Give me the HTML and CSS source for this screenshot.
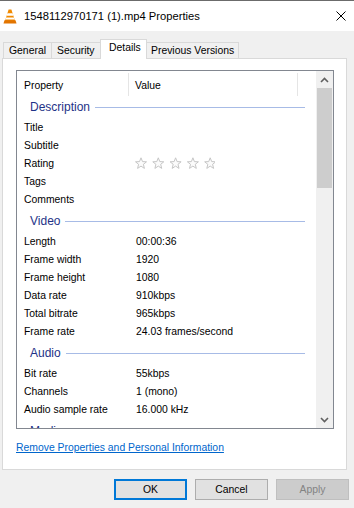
FILE: index.html
```html
<!DOCTYPE html>
<html lang="en">
  <head>
    <meta charset="UTF-8" />
    <meta name="viewport" content="width=device-width, initial-scale=1.0" />
    <title>1548112970171 (1).mp4 Properties</title>
    <link rel="stylesheet" href="styles.css">
  </head>
  <body>
    <div class="window">
      <!-- Title bar -->
      <div class="titlebar">
        <svg class="app-icon" width="14" height="15" viewBox="0 0 14 15">
          <polygon points="5.6,0.5 8.4,0.5 12,12 2,12" fill="#f18a00" />
          <polygon points="4.4,4.3 9.6,4.3 10.4,6.8 3.6,6.8" fill="#ffffff" />
          <polygon points="3.2,8.4 10.8,8.4 11.5,10.6 2.5,10.6" fill="#ffffff" />
          <polygon points="1.5,11.2 12.5,11.2 13.5,14.5 0.5,14.5" fill="#e27400" />
        </svg>
        <span class="title">1548112970171 (1).mp4 Properties</span>
        <svg class="close-icon" width="10" height="10" viewBox="0 0 10 10">
          <path d="M0.5 0.5 L9.5 9.5 M9.5 0.5 L0.5 9.5" stroke="#000" stroke-width="1" />
        </svg>
      </div>

      <!-- Tabs -->
      <div class="tabs">
        <div class="tab tab-general">General</div>
        <div class="tab tab-security">Security</div>
        <div class="tab tab-details active">Details</div>
        <div class="tab tab-versions">Previous Versions</div>
      </div>

      <!-- Tab panel -->
      <div class="panel">
        <div class="listbox">
          <div class="list-body">
            <div class="list-head">
              <div class="col-prop">Property</div>
              <div class="col-val">Value</div>
            </div>

            <div class="group first">Description</div>
            <div class="row"><span class="prop">Title</span></div>
            <div class="row"><span class="prop">Subtitle</span></div>
            <div class="row">
              <span class="prop">Rating</span>
              <span class="val">
                <svg class="stars" width="80" height="13" viewBox="0 0 80 13">
                  <g fill="#fbfbfb" stroke="#c6c6c6" stroke-width="1" stroke-linejoin="round">
                    <polygon points="6,0.8 7.5,4.6 11.5,4.8 8.4,7.3 9.4,11.4 6,9.1 2.6,11.4 3.6,7.3 0.5,4.8 4.5,4.6" />
                    <polygon transform="translate(17.3 0)" points="6,0.8 7.5,4.6 11.5,4.8 8.4,7.3 9.4,11.4 6,9.1 2.6,11.4 3.6,7.3 0.5,4.8 4.5,4.6" />
                    <polygon transform="translate(34.6 0)" points="6,0.8 7.5,4.6 11.5,4.8 8.4,7.3 9.4,11.4 6,9.1 2.6,11.4 3.6,7.3 0.5,4.8 4.5,4.6" />
                    <polygon transform="translate(51.9 0)" points="6,0.8 7.5,4.6 11.5,4.8 8.4,7.3 9.4,11.4 6,9.1 2.6,11.4 3.6,7.3 0.5,4.8 4.5,4.6" />
                    <polygon transform="translate(69.2 0)" points="6,0.8 7.5,4.6 11.5,4.8 8.4,7.3 9.4,11.4 6,9.1 2.6,11.4 3.6,7.3 0.5,4.8 4.5,4.6" />
                  </g>
                </svg>
              </span>
            </div>
            <div class="row"><span class="prop">Tags</span></div>
            <div class="row"><span class="prop">Comments</span></div>

            <div class="group">Video</div>
            <div class="row"><span class="prop">Length</span><span class="val">00:00:36</span></div>
            <div class="row"><span class="prop">Frame width</span><span class="val">1920</span></div>
            <div class="row"><span class="prop">Frame height</span><span class="val">1080</span></div>
            <div class="row"><span class="prop">Data rate</span><span class="val">910kbps</span></div>
            <div class="row"><span class="prop">Total bitrate</span><span class="val">965kbps</span></div>
            <div class="row"><span class="prop">Frame rate</span><span class="val">24.03 frames/second</span></div>

            <div class="group">Audio</div>
            <div class="row"><span class="prop">Bit rate</span><span class="val">55kbps</span></div>
            <div class="row"><span class="prop">Channels</span><span class="val">1 (mono)</span></div>
            <div class="row"><span class="prop">Audio sample rate</span><span class="val">16.000 kHz</span></div>

            <div class="group">Media</div>
          </div>

          <!-- Scrollbar -->
          <div class="scrollbar">
            <div class="sb-btn">
              <svg width="9" height="6" viewBox="0 0 9 6">
                <path d="M1 5 L4.5 1.5 L8 5" fill="none" stroke="#606060" stroke-width="1.6" />
              </svg>
            </div>
            <div class="sb-thumb"></div>
            <div class="sb-track"></div>
            <div class="sb-btn">
              <svg width="9" height="6" viewBox="0 0 9 6">
                <path d="M1 1 L4.5 4.5 L8 1" fill="none" stroke="#606060" stroke-width="1.6" />
              </svg>
            </div>
          </div>
        </div>

        <a class="remove-link" href="#">Remove Properties and Personal Information</a>
      </div>

      <!-- Dialog buttons -->
      <div class="buttons">
        <button class="btn btn-default">OK</button>
        <button class="btn">Cancel</button>
        <button class="btn" disabled>Apply</button>
      </div>
    </div>
  </body>
</html>
```

FILE: styles.css
```css
* {
  margin: 0;
  padding: 0;
  box-sizing: border-box;
}

body {
  font-family: "Liberation Sans", Arial, sans-serif;
  font-size: 10.4px;
  color: #000;
  background: #f0f0f0;
  width: 354px;
  height: 508px;
  overflow: hidden;
}

.window {
  height: 508px;
  display: flex;
  flex-direction: column;
}

/* Title bar */
.titlebar {
  height: 31px;
  background: #fff;
  border-top: 1px solid #6b6b6b;
  display: flex;
  align-items: center;
  padding-left: 3px;
}

.title {
  margin-left: 7px;
  font-size: 11.2px;
  flex: 1;
  line-height: 30px;
}

.close-icon {
  margin-right: 8px;
}

/* Tabs */
.tabs {
  height: 27px;
  display: flex;
  align-items: flex-end;
  padding-left: 3px;
}

.tab {
  height: 16px;
  line-height: 15px;
  border: 1px solid #d9d9d9;
  border-bottom: none;
  border-right: none;
  background: #f0f0f0;
  padding-left: 5px;
}

.tab-general {
  width: 48px;
}

.tab-security {
  width: 49px;
}

.tab-details {
  width: 47px;
}

.tab-versions {
  width: 93px;
  border-right: 1px solid #d9d9d9;
  padding-left: 4px;
}

.tab.active {
  height: 20px;
  margin-bottom: -1px;
  background: #fff;
  position: relative;
  z-index: 1;
  padding-left: 8px;
  border-right: 1px solid #d9d9d9;
  margin-right: -1px;
  line-height: 16px;
}

/* Panel */
.panel {
  margin-left: 2px;
  width: 345px;
  height: 412px;
  border: 1px solid #d9d9d9;
  background: #fff;
  padding: 11px 0 0 13px;
}

.listbox {
  width: 318px;
  height: 359px;
  border: 1px solid #828790;
  display: flex;
}

.list-body {
  flex: 1;
  overflow: hidden;
}

.list-head {
  height: 25px;
  display: flex;
}

.col-prop,
.col-val {
  padding-top: 4px;
  line-height: 18px;
  border-right: 1px solid #e5e5e5;
  margin-top: 2px;
  height: 23px;
}

.col-prop {
  width: 112px;
  padding-left: 7px;
}

.col-val {
  width: 169px;
  padding-left: 6px;
}

.group {
  height: 22px;
  margin-top: 2px;
  line-height: 22px;
  padding-left: 13px;
  font-size: 12px;
  color: #1e3287;
  display: flex;
  align-items: center;
}

.group.first {
  margin-top: 0;
}

.group::after {
  content: "";
  flex: 1;
  height: 1px;
  background: #a7bbe6;
  margin: 1px 11px 0 5px;
}

.row {
  height: 18px;
  line-height: 18px;
  padding-top: 1px;
  display: flex;
}

.prop {
  width: 112px;
  padding-left: 7px;
}

.val {
  padding-left: 7px;
  display: flex;
  align-items: center;
}

.stars {
  display: block;
  margin-left: -1px;
}

/* Scrollbar */
.scrollbar {
  width: 17px;
  background: #f0f0f0;
  display: flex;
  flex-direction: column;
}

.sb-btn {
  height: 17px;
  display: flex;
  align-items: center;
  justify-content: center;
}

.sb-thumb {
  height: 100px;
  margin: 0 1px;
  background: #cdcdcd;
}

.sb-track {
  flex: 1;
}

/* Link */
.remove-link {
  display: inline-block;
  margin-top: 12px;
  line-height: 14px;
  color: #0066cc;
  text-decoration: underline;
}

/* Buttons */
.buttons {
  display: flex;
  justify-content: flex-end;
  gap: 8px;
  padding-right: 5px;
  margin-top: 9px;
}

.btn {
  width: 73px;
  height: 21px;
  font-family: inherit;
  font-size: 10.4px;
  color: #000;
  background: #e1e1e1;
  border: 1px solid #adadad;
}

.btn-default {
  border: 2px solid #0078d7;
}

.btn:disabled {
  background: #cccccc;
  border-color: #bfbfbf;
  color: #838383;
}
```
